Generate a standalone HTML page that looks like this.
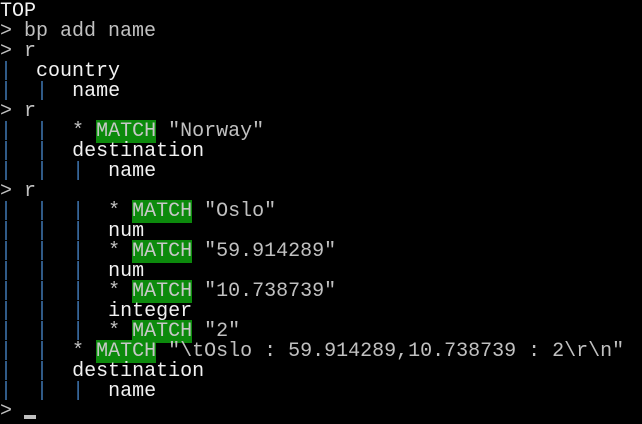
<!DOCTYPE html>
<html><head><meta charset="utf-8"><style>
html,body{margin:0;padding:0;background:#000;width:642px;height:424px;overflow:hidden}
pre{margin:0;padding:2px 0 0 0;font-family:"Liberation Mono",monospace;font-size:20px;line-height:20px;color:#c0c0c0;white-space:pre}
.w{color:#f2f2f2}.p{color:#3a6ea5}.m{background:#0c8a0c;color:#c8c8c8}
.c{display:inline-block;width:12px;height:4px;background:#c0c0c0;vertical-align:-3px}
</style></head><body><pre><span class="w">TOP</span>
&gt; bp add name
&gt; r
<span class="p">|</span>  <span class="w">country</span>
<span class="p">|</span>  <span class="p">|</span>  <span class="w">name</span>
&gt; r
<span class="p">|</span>  <span class="p">|</span>  * <span class="m">MATCH</span> "Norway"
<span class="p">|</span>  <span class="p">|</span>  <span class="w">destination</span>
<span class="p">|</span>  <span class="p">|</span>  <span class="p">|</span>  <span class="w">name</span>
&gt; r
<span class="p">|</span>  <span class="p">|</span>  <span class="p">|</span>  * <span class="m">MATCH</span> "Oslo"
<span class="p">|</span>  <span class="p">|</span>  <span class="p">|</span>  <span class="w">num</span>
<span class="p">|</span>  <span class="p">|</span>  <span class="p">|</span>  * <span class="m">MATCH</span> "59.914289"
<span class="p">|</span>  <span class="p">|</span>  <span class="p">|</span>  <span class="w">num</span>
<span class="p">|</span>  <span class="p">|</span>  <span class="p">|</span>  * <span class="m">MATCH</span> "10.738739"
<span class="p">|</span>  <span class="p">|</span>  <span class="p">|</span>  <span class="w">integer</span>
<span class="p">|</span>  <span class="p">|</span>  <span class="p">|</span>  * <span class="m">MATCH</span> "2"
<span class="p">|</span>  <span class="p">|</span>  * <span class="m">MATCH</span> "\tOslo : 59.914289,10.738739 : 2\r\n"
<span class="p">|</span>  <span class="p">|</span>  <span class="w">destination</span>
<span class="p">|</span>  <span class="p">|</span>  <span class="p">|</span>  <span class="w">name</span>
&gt; <span class="c"></span></pre></body></html>
